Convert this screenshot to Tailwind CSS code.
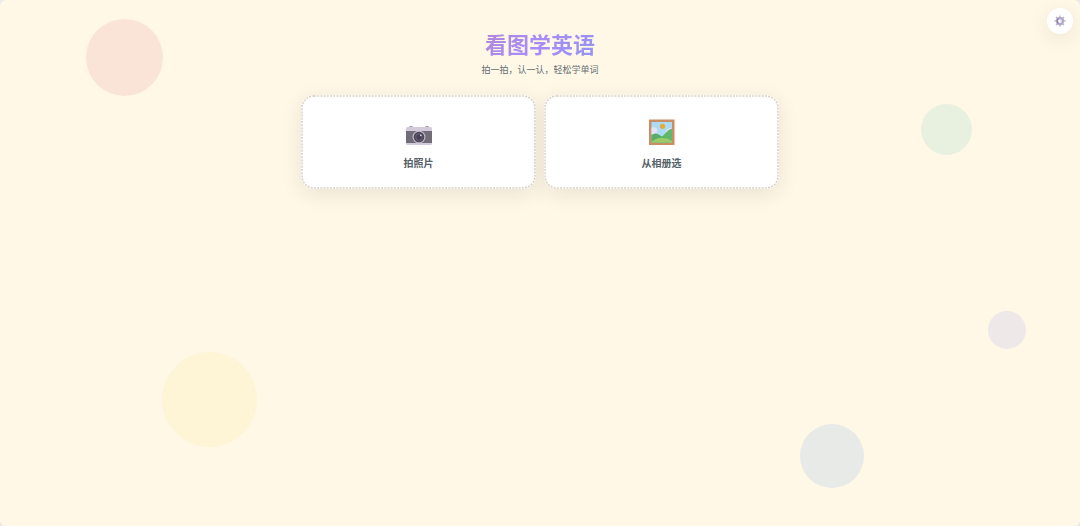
<!DOCTYPE html>
<html lang="zh-CN">
<head>
    <meta charset="UTF-8">
    <meta name="viewport" content="width=device-width, initial-scale=1.0">
    <title>看图学英语</title>
    <script src="https://cdn.jsdelivr.net/npm/@tailwindcss/browser@4"></script>
</head>
<body class="bg-[#e9e9ea] font-['Noto_Sans_CJK_SC',sans-serif]">
    <div class="relative min-h-screen overflow-hidden rounded-md bg-[#fff8e7] px-4">

        <!-- Background bubbles -->
        <div class="absolute top-[19px] left-[8%] size-[77px] rounded-full bg-[#fae4d7]"></div>
        <div class="absolute top-[104px] right-[10%] size-[51px] rounded-full bg-[#e8f0e0]"></div>
        <div class="absolute bottom-[79px] left-[15%] size-[95px] rounded-full bg-[#fdf5d5]"></div>
        <div class="absolute right-[20%] bottom-[38px] size-16 rounded-full bg-[#e8eae8]"></div>
        <div class="absolute top-[311px] right-[5%] size-[38px] rounded-full bg-[#eee8e8]"></div>

        <!-- Settings -->
        <button type="button" aria-label="设置" class="absolute top-2 right-[7px] flex size-[26px] items-center justify-center rounded-full bg-white shadow-[0_5px_20px_rgba(45,40,30,0.09)]">
            <svg class="size-3" viewBox="0 0 24 24" fill="none">
                <g stroke="#bcb4d1" stroke-width="3">
                    <path d="M12 1v5M12 18v5M1 12h5M18 12h5"/>
                    <path d="M4.200 4.200l3.600 3.600M16.200 16.200l3.600 3.600M4.200 19.800l3.600-3.600M16.200 7.800l3.600-3.600"/>
                </g>
                <circle cx="12" cy="12" r="6" stroke="#b0a7c9" stroke-width="4.500"/>
                <path d="M9 17a6 6 0 0 1 0-10" stroke="#8b80a6" stroke-width="2.500"/>
                <path d="M12 12h3" stroke="#d9d4e5" stroke-width="3"/>
            </svg>
        </button>

        <main class="relative mx-auto max-w-[478px] pt-[27px]">
            <header class="text-center">
                <h1 class="bg-linear-135 from-[#d0706b] via-[#a78bfa] to-[#60a5e0] to-90% bg-clip-text text-[22px] leading-8 font-bold text-transparent">看图学英语</h1>
                <p class="mt-[3px] text-[9px] leading-4 text-[#636e72]">拍一拍，认一认，轻松学单词</p>
            </header>

            <div class="mt-[17px] grid grid-cols-2 gap-2">
                <button type="button" class="relative flex flex-col items-center rounded-[13px] bg-white pt-6 pb-[18px] shadow-[0_5px_20px_rgba(45,40,30,0.1)]">
                    <!-- Fine dashed outline -->
                    <svg class="pointer-events-none absolute inset-0 size-full p-px overflow-visible" fill="none">
                        <rect width="100%" height="100%" rx="12" stroke="#d9d1c4" stroke-width="1.500" stroke-dasharray="2 1.200"/>
                    </svg>
                    <svg class="size-7" viewBox="0 0 28 28">
                        <rect x="4" y="7" width="4" height="2" rx="1" fill="#aaa4ac"/>
                        <rect x="20" y="7" width="4" height="2" rx="1" fill="#aaa4ac"/>
                        <rect x="1" y="8" width="26" height="18" rx="1.500" fill="#d3cbdc"/>
                        <rect x="1" y="12" width="26" height="12" fill="#706c78"/>
                        <circle cx="14" cy="18" r="6.500" fill="#c3bbcb"/>
                        <circle cx="14" cy="18" r="5.300" fill="#4d465a"/>
                        <circle cx="14" cy="18" r="3.800" fill="#625a73"/>
                        <circle cx="14" cy="18" r="2.500" fill="#464052"/>
                        <circle cx="15.800" cy="16.300" r="0.900" fill="#d9d4e3"/>
                    </svg>
                    <span class="mt-2 text-[10px] leading-4 font-bold text-[#566267]">拍照片</span>
                </button>

                <button type="button" class="relative flex flex-col items-center rounded-[13px] bg-white pt-6 pb-[18px] shadow-[0_5px_20px_rgba(45,40,30,0.1)]">
                    <svg class="pointer-events-none absolute inset-0 size-full p-px overflow-visible" fill="none">
                        <rect width="100%" height="100%" rx="12" stroke="#d9d1c4" stroke-width="1.500" stroke-dasharray="2 1.200"/>
                    </svg>
                    <svg class="size-7" viewBox="0 0 28 28">
                        <rect x="1" y="0.500" width="25.500" height="25.500" fill="#cb8e63"/>
                        <rect x="3.500" y="3" width="20.500" height="20.500" fill="#acdcf5"/>
                        <path d="M3.500 8.500q5-1 6 3 0 4-6 4zM24 9q-5 0-7 4l7 2z" fill="#e3e2f4"/>
                        <circle cx="14.500" cy="7.300" r="2.600" fill="#e8a936"/>
                        <path d="M12 18.500q3-1 5-4 3-4 7-5v14H12z" fill="#60b86c"/>
                        <path d="M3.500 16q4-3 8 0 2 2 5 2l4 5.500h-17z" fill="#54ad69"/>
                        <path d="M3.500 22.500q5-4 11-3.800 5 0 9.500 3.300v1.500H3.500z" fill="#9acb66"/>
                    </svg>
                    <span class="mt-2 text-[10px] leading-4 font-bold text-[#566267]">从相册选</span>
                </button>
            </div>
        </main>
    </div>
</body>
</html>
